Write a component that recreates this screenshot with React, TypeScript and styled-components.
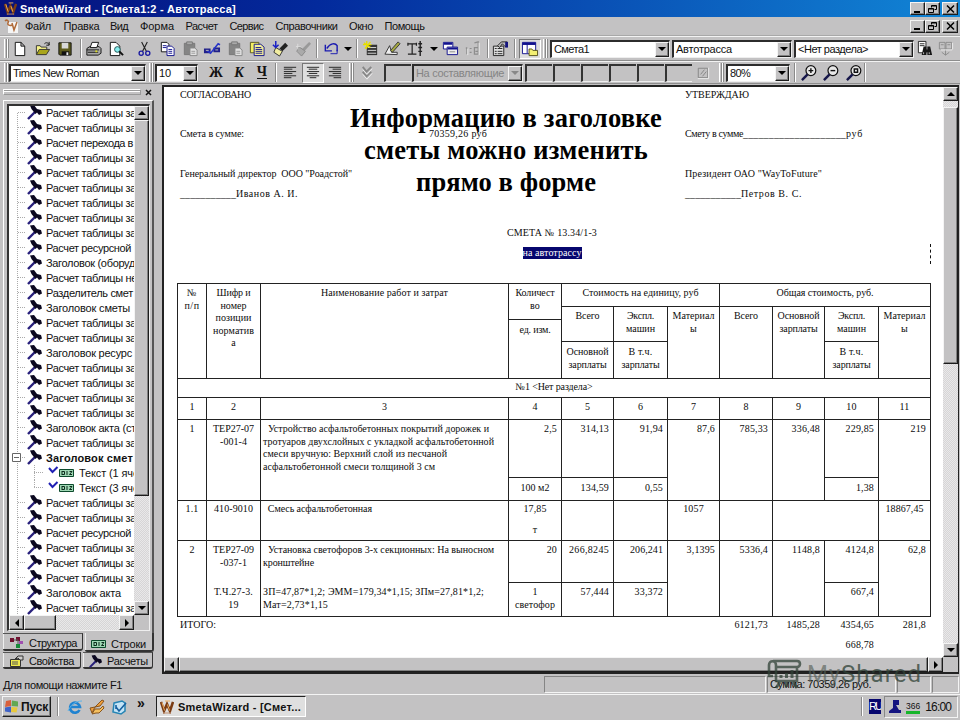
import React, { useLayoutEffect, useRef, useState } from "react";
import styled, { createGlobalStyle, css } from "styled-components";

const face = "#c3c2c3";
const raised = css`
  background: ${face};
  border: 1px solid;
  border-color: #f4f4f4 #1c1c1c #1c1c1c #f4f4f4;
  box-shadow: inset -1px -1px 0 #808080;
`;
const dither = css`
  background: repeating-conic-gradient(#d6d5d6 0 25%, #e9e8e9 0 50%) 0 0 / 2px 2px;
`;

const Global = createGlobalStyle`
  * { box-sizing: border-box; }
  body { margin: 0; background: ${face}; overflow: hidden; }
  svg { display: block; flex: none; }
`;

const Window = styled.div`
  width: 960px;
  height: 720px;
  display: flex;
  flex-direction: column;
  overflow: hidden;
  background: ${face};
  color: #111;
  font: 11px/14px "Liberation Sans", Arial, sans-serif;
`;

/* ---------- text fitted to a column width by tracking ---------- */
const FitSpan = styled.span`
  display: inline-block;
  white-space: pre;
  flex: none;
`;
function Fit({ w, children }: { w: number; children: string }) {
  const ref = useRef<HTMLSpanElement>(null);
  const [gap, setGap] = useState(0);
  useLayoutEffect(() => {
    const el = ref.current;
    if (!el) return;
    const range = document.createRange();
    range.selectNodeContents(el);
    const natural = range.getBoundingClientRect().width - gap * children.length;
    setGap((w - natural) / children.length);
  }, [w, children]);
  return (
    <FitSpan ref={ref} style={{ letterSpacing: gap }}>
      {children}
    </FitSpan>
  );
}

/* ---------- title and menu ---------- */
const TitleBar = styled.header`
  height: 17px;
  flex: none;
  display: flex;
  align-items: center;
  padding: 0 2px 0 4px;
  gap: 3px;
  color: #fff;
  font-weight: bold;
  background: linear-gradient(90deg, #06107c 0%, #032a9c 33%, #0a55b8 66%, #1186d6 100%);
`;
const MenuBar = styled.nav`
  height: 19px;
  flex: none;
  display: flex;
  align-items: center;
  padding: 0 2px 0 4px;
  border-bottom: 1px solid #a8a8a8;
`;
const MenuItem = styled.div<{ $slot: number }>`
  width: ${(p) => p.$slot}px;
`;
const Caption = styled.div`
  margin-left: auto;
  display: flex;
`;
const CapButton = styled.div<{ $gap?: boolean }>`
  ${raised}
  width: ${(p) => (p.$gap ? 16 : 15)}px;
  height: 13px;
  margin-left: ${(p) => (p.$gap ? 2 : 0)}px;
  display: grid;
  place-items: center;
`;
function CaptionButtons() {
  return (
    <Caption>
      <CapButton><svg width="11" height="10" stroke="#000" strokeWidth="2"><path d="M2 8h6" /></svg></CapButton>
      <CapButton>
        <svg width="11" height="10" fill="none" stroke="#000"><path d="M4.500 3.500v-2h5v4h-2M4.500 2h5M1.500 4.500h5v4h-5zM1.500 5h5" /></svg>
      </CapButton>
      <CapButton $gap><svg width="11" height="10" stroke="#000" strokeWidth="1.500"><path d="M2 1.500l7 7M9 1.500l-7 7" /></svg></CapButton>
    </Caption>
  );
}
const menus: [string, number, number][] = [
  ["Файл", 26, 38.5], ["Правка", 36, 46.5], ["Вид", 18, 30], ["Форма", 34, 45.5], ["Расчет", 32, 44],
  ["Сервис", 34, 46], ["Справочники", 62, 73.5], ["Окно", 24, 35.5], ["Помощь", 40, 50],
];

/* ---------- toolbars ---------- */
const Bar = styled.div<{ $h: number }>`
  height: ${(p) => p.$h}px;
  flex: none;
  display: flex;
  align-items: center;
  padding-left: 4px;
  border-top: 1px solid #f2f2f2;
  border-bottom: 1px solid #8d8d8d;
`;
const Grip = styled.i<{ $ml?: number; $mr?: number }>`
  width: 5px;
  height: 19px;
  flex: none;
  margin: 0 ${(p) => p.$mr ?? 0}px 0 ${(p) => p.$ml ?? 0}px;
  border: solid;
  border-width: 0 1px 0 1px;
  border-color: #8a8a8a #8a8a8a #8a8a8a #fff;
  background: linear-gradient(90deg, ${face} 1px, #8a8a8a 1px 2px, #fff 2px 3px);
`;
const Sep = styled.i<{ $ml: number }>`
  width: 2px;
  height: 19px;
  flex: none;
  margin-left: ${(p) => p.$ml}px;
  background: linear-gradient(90deg, #8a8a8a 50%, #fff 50%);
`;
const Tool = styled.div<{ $ml: number; $w?: number; $on?: boolean }>`
  width: ${(p) => p.$w ?? 20}px;
  height: 20px;
  flex: none;
  margin-left: ${(p) => p.$ml}px;
  display: grid;
  place-items: center;
  ${(p) => p.$on && css`
    background: #dedede;
    border: 1px solid;
    border-color: #777 #fff #fff #777;
  `}
`;
const Letter = styled.b<{ $italic?: boolean; $line?: boolean }>`
  font: ${(p) => (p.$italic ? "italic " : "")}bold 14px/16px "Liberation Serif", serif;
  ${(p) => p.$line && "border-bottom: 1.500px solid #111; line-height: 12px;"}
`;
const ComboBox = styled.div<{ $w: number; $ml?: number; $off?: boolean }>`
  width: ${(p) => p.$w}px;
  height: 18px;
  flex: none;
  margin-left: ${(p) => p.$ml ?? 0}px;
  display: flex;
  align-items: center;
  justify-content: space-between;
  padding-left: 2px;
  background: ${(p) => (p.$off ? face : "#fff")};
  color: ${(p) => (p.$off ? "#858585" : "#111")};
  border: 1px solid;
  border-width: 2px 1px 1px 2px;
  border-color: #2c2c2c #eee #eee #2c2c2c;
`;
const Drop = styled.div`
  ${raised}
  width: 14px;
  height: 15px;
  display: grid;
  place-items: center;
`;
const Well = styled.i<{ $w: number; $ml: number }>`
  width: ${(p) => p.$w}px;
  height: 18px;
  flex: none;
  margin-left: ${(p) => p.$ml}px;
  border-top: 2px solid #333;
  border-left: 2px solid #333;
  border-bottom: 1px solid #eee;
`;
function Tri({ d = "down", c = "#000" }: { d?: "up" | "down" | "left" | "right"; c?: string }) {
  const paths = { up: "M0 6h8L4 2z", down: "M0 2h8L4 6z", left: "M6 0v8L2 4z", right: "M2 0v8l4-4z" };
  return <svg width="8" height="8" fill={c}><path d={paths[d]} /></svg>;
}
function Combo({ text, fit, w, ml, off }: { text: string; fit: number; w: number; ml?: number; off?: boolean }) {
  return (
    <ComboBox $w={w} $ml={ml} $off={off}>
      <Fit w={fit}>{text}</Fit>
      <Drop><Tri c={off ? "#888" : "#000"} /></Drop>
    </ComboBox>
  );
}

const glyphs: Record<string, React.ReactNode> = {
  blank: <path d="M4.500 2.500h6l4 4v10h-10zM10.500 2.500v4h4" fill="#fff" stroke="#111" />,
  open: <><path d="M2.500 15V6h4l1 1.500h6V10" fill="#f7f38a" stroke="#333" /><path d="M2.500 15.500l3-5.500h11l-3.500 5.500z" fill="#a9a51c" stroke="#333" /><path d="M11 4c2-2 4-1 5 1m0-3v3.500h-3" fill="none" stroke="#111" /></>,
  save: <><path d="M3 3h13v13H4l-1-1z" fill="#5c5a1c" stroke="#111" /><path d="M6 3h7v6H6z" fill="#d8d8d8" /><path d="M6 12h8v4H6z" fill="#111" /><path d="M11 13h2v3h-2z" fill="#eee" /></>,
  print: <><path d="M3 9l3-2h10l2 2v5l-3 2H3z" fill="#aaa" stroke="#111" /><path d="M6.500 8l2-5.500h7L13.500 8z" fill="#fff" stroke="#111" /><path d="M3 10.500h13M4 13h11" stroke="#111" /><path d="M12 12h2" stroke="#dd2" strokeWidth="2" /></>,
  preview: <><path d="M3.500 2.500h6l4 4v10h-10z" fill="#fff" stroke="#111" /><circle cx="11" cy="10" r="3" fill="#8ee" stroke="#255" /><path d="M13 12l4 4" stroke="#111" strokeWidth="2" /></>,
  cut: <><path d="M7 2l5 10M13 2L8 12" stroke="#222" strokeWidth="1.200" /><circle cx="6.500" cy="14" r="2.200" fill="none" stroke="#1a1aa0" strokeWidth="1.400" /><circle cx="13.500" cy="14" r="2.200" fill="none" stroke="#1a1aa0" strokeWidth="1.400" /></>,
  copy: <><path d="M3.500 2.500h6l2 2v8h-8z" fill="#fff" stroke="#111" /><path d="M9.500 6.500h5l2.500 2.500v7.500H9.500z" fill="#fff" stroke="#12128e" /><path d="M5 6h4M5 8h4M11 10h4M11 12h4M11 14h4" stroke="#12128e" /></>,
  pasteOff: <><path d="M3.500 3.500h11v12h-11z" fill="#858585" stroke="#777" /><path d="M6 2h6v3H6z" fill="#aaa" stroke="#777" /><path d="M9.500 8.500h5l2.500 2v6H9.500z" fill="#e2e2e2" stroke="#888" /><path d="M11 12h4M11 14h4" stroke="#999" /></>,
  link: <><path d="M1 9h7v5H1zM11 8h7v5h-7z" fill="#20208a" /><path d="M4 11l4 3 8-10 2 1" stroke="#2633c8" fill="none" strokeWidth="1.600" /><path d="M3 11h3M13 10.500h3" stroke="#bbb" /></>,
  notes: <><path d="M2.500 2.500h9v11h-9z" fill="#f3ef62" stroke="#5a5720" /><path d="M6.500 4.500h7l3.500 3v9H6.500z" fill="#f3ef9a" stroke="#14148c" /><path d="M8 8h6M8 10h7M8 12h7M8 14h7" stroke="#14148c" /></>,
  brush: <><path d="M9 9l6-6 3 3-6 6z" fill="#222" /><path d="M5 8l7 4-3 5-6-4z" fill="#f2eda0" stroke="#333" /><path d="M5 1v7M2 5l3 3 3-3" stroke="#1b22c6" fill="none" strokeWidth="1.600" /></>,
  brushOff: <><path d="M8 10l8-8 2 2-7 8z" fill="#999" /><path d="M5 7l7 5-4 5-5-5z" fill="#aaa" stroke="#888" /><path d="M2 7h5M4 4v6" stroke="#ddd" /></>,
  undo: <><path d="M16 12V6c-2-3-7-3-11 3" fill="none" stroke="#1b1bb0" strokeWidth="1.500" /><path d="M3.500 5v6.500h7" fill="none" stroke="#1b1bb0" strokeWidth="1.500" /><path d="M9 14.500h7v-4" fill="none" stroke="#1b1bb0" /></>,
  list: <><path d="M5 5h11v11H5z" fill="#333" /><path d="M6 8h9M6 11h9M6 14h9" stroke="#ddd" /><path d="M2 3l7 5M9 2L3 9M5 1v8M1 5h9" stroke="#e7df00" strokeWidth="1.300" /></>,
  pen: <><path d="M2 15l5-9 2 7h6v2.500z" fill="#eee" stroke="#333" /><path d="M8 11l8-9 2 2-8 9z" fill="#a6aa42" stroke="#333" /></>,
  pole: <><path d="M2 4h9M6.500 4v11M2 15h9M2 3v3M11 3v3" stroke="#222" fill="none" strokeWidth="1.300" /><path d="M15 1v16M13 4h4M13 8h4M13 12h4" stroke="#222" strokeWidth="1.500" /></>,
  windows: <><path d="M2.500 2.500h10v7h-10z" fill="#fff" stroke="#12128e" /><path d="M6.500 7.500h11v8h-11z" fill="#eee" stroke="#12128e" /><path d="M3 4h9M7 9h10" stroke="#12128e" strokeWidth="2" /><path d="M9 12.500h6" stroke="#888" /></>,
  numOff: <><path d="M3 8v7M2 9l1-1M6 9h2M6 13h2M11 3l4-1v13h-4V8h4M12 12h3" stroke="#8d8d8d" fill="none" strokeWidth="1.300" /><path d="M4 9v7M16 3v13" stroke="#eee" /></>,
  props: <><path d="M2.500 6.500h11v10h-11z" fill="#ddd" stroke="#222" /><path d="M4 9h2M7 9h5M4 12h2M7 12h5M4 14.500h2M7 14.500h5" stroke="#222" /><path d="M7 6l4-4h6v5h-2L12 4 9 8z" fill="#bbb" stroke="#222" /><path d="M15 2h3v6h-3z" fill="#15157e" /></>,
  tree: <><path d="M1.500 2.500h14v12h-14z" fill="#fff" stroke="#12128e" /><path d="M1.500 4h14" stroke="#12128e" strokeWidth="2.500" /><path d="M6.500 5v9" stroke="#12128e" /><path d="M8.500 16.500v-7h3l1 1.500h5v5.500z" fill="#f3ef72" stroke="#55521a" /></>,
  find: <><path d="M2.500 1.500h8v12h-8z" fill="#fff" stroke="#222" /><path d="M4 4h5M4 6h5" stroke="#222" /><path d="M6 16l2-9h3v9zM12 16V7h3l2 9zM9 10h6v3H9z" fill="#161616" /><path d="M8 13v2M14 13v2" stroke="#bbb" /></>,
  findOff: <><path d="M2.500 2.500h6v7h-6zM9.500 2.500h6v7h-6zM4 5h3M11 5h3M9 9v7M5 13l4 3 4-3" fill="none" stroke="#8b8b8b" /><path d="M4 10.500h12M16.500 3v7" stroke="#eee" /></>,
  left: <path d="M3 3.500h13M3 5.500h9M3 8h13M3 10h9M3 12.500h13M3 14.500h8" stroke="#222" />,
  center: <path d="M3 3.500h13M5 5.500h9M3 8h13M5 10h9M3 12.500h13M6 14.500h7" stroke="#222" />,
  right: <path d="M3 3.500h13M7 5.500h9M3 8h13M7 10h9M3 12.500h13M8 14.500h8" stroke="#222" />,
  chevrons: <><path d="M5 3l4 5 5-5M5 8l4 5 5-5" fill="none" stroke="#888" strokeWidth="2" /><path d="M5 6l4.500 5L15 5M5 11l4.500 5L15 10" fill="none" stroke="#eee" /></>,
  boxOff: <><path d="M4.500 4.500h10v10h-10z" fill="none" stroke="#858585" /><path d="M7 11l4-5M9 13l4-5" stroke="#858585" /><path d="M15.500 4v11.500H4" stroke="#eee" fill="none" /></>,
};
const lens = (mark: string) => (
  <><circle cx="11.500" cy="7" r="5.200" fill="#e8e8e8" stroke="#111" strokeWidth="1.300" /><path d="M8 11l-6 6" stroke="#16164a" strokeWidth="2.600" /><path d={mark} fill="none" stroke="#111" strokeWidth="1.500" /></>
);
glyphs.plus = lens("M9 7h5M11.500 4.500v5");
glyphs.minus = lens("M9 7h5");
glyphs.fit = lens("M9.800 5.300h3.500v3.500H9.800z");

function Icon({ name }: { name: string }) {
  return <svg width="18" height="17" viewBox="0 0 19 18">{glyphs[name]}</svg>;
}
function T({ n, ml, on, w }: { n: string; ml: number; on?: boolean; w?: number }) {
  return <Tool $ml={ml} $on={on} $w={w}><Icon name={n} /></Tool>;
}

/* ---------- workspace ---------- */
const Work = styled.main`
  display: flex;
  height: 590px;
  flex: none;
`;
const Side = styled.aside`
  width: 162px;
  flex: none;
  display: flex;
  flex-direction: column;
`;
const DockHead = styled.div`
  height: 16px;
  display: flex;
  align-items: center;
  gap: 4px;
  padding-left: 3px;
`;
const DockGrip = styled.i`
  width: 138px;
  height: 6px;
  border: 1px solid;
  border-color: #fff #999 #999 #fff;
  background: linear-gradient(#999 1px, #fff 1px 2px, ${face} 2px);
`;
const TreeFrame = styled.div`
  width: 151px;
  height: 533px;
  margin-left: 3px;
  padding: 3px 3px 0 3px;
  border: 1px solid;
  border-width: 1px 2px 0 1px;
  border-color: #fff #555 #555 #fff;
`;
const TreeBox = styled.div`
  width: 143px;
  height: 527px;
  display: grid;
  grid-template: 509px 15px / 125px 15px;
  border: 2px solid;
  border-width: 2px 1px 1px 2px;
  border-color: #333 #eee #eee #333;
  background: #fff;
`;
const Tree = styled.div`
  overflow: hidden;
  font-size: 11px;
  background: repeating-linear-gradient(#aaa 0 1px, transparent 1px 2px) 8px 7px / 1px 100% no-repeat;
`;
const TreeRow = styled.div<{ $bold?: boolean }>`
  height: 15px;
  display: flex;
  align-items: center;
  position: relative;
  top: -1px;
  white-space: nowrap;
  font-weight: ${(p) => (p.$bold ? "bold" : "normal")};
`;
const BarButton = styled.div`
  ${raised}
  display: grid;
  place-items: center;
  flex: none;
  min-width: 15px;
  min-height: 14px;
`;
const Thumb = styled.div<{ $len: number; $v?: boolean }>`
  ${raised}
  ${(p) => (p.$v ? `height: ${p.$len}px;` : `width: ${p.$len}px;`)}
  flex: none;
`;
const VTrack = styled.div`
  ${dither}
  display: flex;
  flex-direction: column;
  & > :last-child { margin-top: auto; }
`;
const HTrack = styled.div`
  ${dither}
  display: flex;
  & > :last-child { margin-left: auto; }
`;
const Corner = styled.div`
  background: ${face};
`;
const TabRow = styled.div`
  display: flex;
  padding-left: 3px;
  gap: 2px;
`;
const Tab = styled.div<{ $w: number; $on?: boolean; $h: number }>`
  width: ${(p) => p.$w}px;
  height: ${(p) => p.$h}px;
  display: flex;
  align-items: center;
  gap: ${(p) => (p.$on ? 4 : 5)}px;
  padding: ${(p) => (p.$on ? 4 : 2)}px 0 0 6px;
  border: solid #333;
  border-width: ${(p) => (p.$on ? "0 2px 2px 0" : "1px 1px 2px 0")};
  border-top-color: #555;
  box-shadow: inset 1px 0 0 #eee;
  border-radius: 0 0 3px 2px;
`;

function Hammer({ s = 15 }: { s?: number }) {
  return (
    <svg width={s} height={s} viewBox="0 0 15 15">
      <path d="M1 14L9 6" stroke="#28207c" strokeWidth="2.400" />
      <path d="M3 0.500l4-.5 3 4 4 1 1 3.500-3 1.500L10 7.500 8.500 9 4.500 4z" fill="#0b0820" />
    </svg>
  );
}
function Branch({ nested, last, open }: { nested?: boolean; last?: boolean; open?: boolean }) {
  if (nested)
    return (
      <svg width="50" height="15" fill="none">
        <path d={`M25.500 0v${last ? 8 : 15}M25 7.500h10`} stroke="#aaa" strokeDasharray="1 1" />
        <path d="M40 3l3.500 4 5-5" stroke="#2020b4" strokeWidth="2" />
      </svg>
    );
  return (
    <svg width="18" height="15">
      <path d="M9 7.500h8" stroke="#aaa" strokeDasharray="1 1" />
      {open && <path d="M3.500 3.500h8v8h-8zM5 7.500h5" fill="#fff" stroke="#666" />}
    </svg>
  );
}
const Mark = () => (
  <svg width="16" height="8">
    <path d="M.5.500h14v7H.5z" fill="#9fd8b4" stroke="#0c4a2c" />
    <path d="M3 2v4M3 2.500h2.500v3H3M8 2v4M10.500 2.500H13L10.500 5.500H13" fill="none" stroke="#0b2a1c" />
  </svg>
);

const tbl = "Расчет таблицы за";
const tree: string[] = [
  tbl, tbl, "Расчет перехода в", tbl, tbl, tbl, tbl, tbl, tbl, "Расчет ресурсной", "Заголовок (оборуд",
  "Расчет таблицы не", "Разделитель смет", "Заголовок сметы", tbl, tbl, "Заголовок ресурс", tbl, tbl, tbl, tbl,
  "Заголовок акта (ст", tbl, "*Заголовок смет", ">Текст (1 яче", ">Текст (3 яче", tbl, tbl, "Расчет ресурсной",
  tbl, tbl, tbl, "Заголовок акта", tbl,
];
const treeWidths: Record<string, number> = {
  [tbl]: 90, "Расчет перехода в": 87, "Расчет ресурсной": 85, "Заголовок (оборуд": 89, "Расчет таблицы не": 91,
  "Разделитель смет": 87, "Заголовок сметы": 84, "Заголовок ресурс": 86, "Заголовок акта (ст": 90,
  "*Заголовок смет": 87, ">Текст (1 яче": 60, ">Текст (3 яче": 60, "Заголовок акта": 75,
};

function Sidebar() {
  return (
    <Side>
      <DockHead>
        <DockGrip />
        <svg width="7" height="7" stroke="#111" strokeWidth="1.500"><path d="M1 1l5 5M6 1L1 6" /></svg>
      </DockHead>
      <TreeFrame>
        <TreeBox>
          <Tree>
            {tree.map((t, i) => {
              const nested = t[0] === ">";
              const bold = t[0] === "*";
              return (
                <TreeRow key={i} $bold={bold}>
                  <Branch nested={nested} last={t.includes("3")} open={bold} />
                  {nested ? <Mark /> : <Hammer />}
                  <svg width="4" height="1" />
                  <Fit w={treeWidths[t]}>{nested || bold ? t.slice(1) : t}</Fit>
                </TreeRow>
              );
            })}
          </Tree>
          <VTrack>
            <BarButton><Tri d="up" /></BarButton>
            <Thumb $len={376} $v />
            <BarButton><Tri /></BarButton>
          </VTrack>
          <HTrack>
            <BarButton><Tri d="left" /></BarButton>
            <Thumb $len={32} />
            <BarButton><Tri d="right" /></BarButton>
          </HTrack>
          <Corner />
        </TreeBox>
      </TreeFrame>
      <TabRow>
        <Tab $w={80} $h={18}>
          <svg width="15" height="13"><path d="M1 2h4v4H1zM7 1h4v4H7z" fill="#701030" /><path d="M7 8h4v4H7z" fill="#168a3a" /><path d="M5 4h4v4" fill="none" stroke="#555" /><path d="M10 5h4v3h-4z" fill="#a050b0" /></svg>
          <Fit w={48}>Структура</Fit>
        </Tab>
        <Tab $w={69} $h={19} $on>
          <Mark />
          <Fit w={35}>Строки</Fit>
        </Tab>
      </TabRow>
      <TabRow>
        <Tab $w={78} $h={17}>
          <svg width="15" height="12"><path d="M1.500 4.500h10v7h-10z" fill="#eee94c" stroke="#333" /><path d="M6 4l3-3h5v4h-3L9 3z" fill="#ccc" stroke="#333" /><path d="M3 7h6M3 9h6" stroke="#555" /></svg>
          <Fit w={45}>Свойства</Fit>
        </Tab>
        <Tab $w={70} $h={17}>
          <Hammer s={13} />
          <Fit w={41}>Расчеты</Fit>
        </Tab>
      </TabRow>
    </Side>
  );
}

/* ---------- document ---------- */
const DocFrame = styled.section`
  width: 797px;
  height: 589px;
  margin-top: 1px;
  display: grid;
  grid-template: 570px 15px / 779px 15px;
  border: 2px solid;
  border-width: 2px 1px 2px 2px;
  border-color: #222;
  background: #fff;
`;
const Page = styled.article`
  position: relative;
  overflow: hidden;
  background: #fff;
  font: 10px/14px "Liberation Serif", "Times New Roman", serif;
  color: #0c0c0c;
`;
const Heading = styled.h1`
  position: absolute;
  top: 15px;
  left: 152px;
  width: 380px;
  margin: 0;
  text-align: center;
  font: bold 26.500px/32px "Liberation Serif", "Times New Roman", serif;
  color: #000;
`;
const Approvals = styled.div`
  display: grid;
  grid-template-columns: 249px 256px 240px;
  grid-template-rows: 39px 40px 20px;
  grid-auto-rows: 39px;
  height: 139px;
  padding: 1px 0 0 16px;
`;
const Centered = styled.div`
  height: 20px;
  width: 776px;
  text-align: center;
`;
const Selected = styled.mark`
  display: inline-block;
  height: 12px;
  line-height: 12px;
  background: #06066e;
  color: #fff;
`;
const Caret = styled.i`
  position: absolute;
  left: 766px;
  top: 157px;
  height: 20px;
  border-left: 1px dashed #111;
`;
const cols = "29px 54px 248px 53px 52px 54px 52px 53px 52px 54px 52px";
const Table = styled.div`
  width: 754px;
  margin: 17px 0 0 13px;
  display: grid;
  grid-template-columns: ${cols};
  grid-template-rows: 23px 13px 22px 37px 19px 22px 58px 23px 40px 42px 34px;
  border: 1px solid #222;
  border-width: 1px 0 0 1px;
`;
const Cell = styled.div<{ $c: number; $r: number; $cs?: number; $rs?: number; $a?: string; $pt?: number; $bare?: boolean }>`
  grid-column: ${(p) => p.$c} / span ${(p) => p.$cs ?? 1};
  grid-row: ${(p) => p.$r} / span ${(p) => p.$rs ?? 1};
  display: flex;
  flex-direction: column;
  align-items: ${(p) => p.$a ?? "center"};
  padding: ${(p) => p.$pt ?? 3}px ${(p) => (p.$a === "flex-end" ? 4 : 0)}px 0 ${(p) => (p.$a === "flex-start" ? 2 : 0)}px;
  border: solid #222;
  border-width: 0 ${(p) => (p.$bare ? 0 : 1)}px 1px 0;
  line-height: 12.600px;
  white-space: pre;
  letter-spacing: 0.150px;
`;
const Gap = styled.i<{ $h: number }>`
  height: ${(p) => p.$h}px;
  flex: none;
`;
const Totals = styled.div`
  width: 754px;
  margin-left: 13px;
  padding: 2px 0 0 1px;
  display: grid;
  grid-template-columns: ${cols};
  grid-template-rows: 20px 20px;
  line-height: 12px;
  letter-spacing: 0.150px;
`;
const Total = styled.div<{ $c: number; $r?: number }>`
  grid-column: ${(p) => p.$c};
  grid-row: ${(p) => p.$r ?? 1};
  text-align: ${(p) => (p.$c === 1 ? "left" : "right")};
  padding: 0 5px 0 2px;
`;

/* a line is a text, a text with its width, or a gap in pixels */
type Line = string | [string, number] | number;
interface C { c: number; r: number; cs?: number; rs?: number; a?: "l" | "r"; pt?: number; bare?: boolean; t?: Line[] }
const cells: C[] = [
  { c: 1, r: 1, rs: 4, t: [["№", 10], ["п/п", 15]] },
  { c: 2, r: 1, rs: 4, t: [["Шифр и", 34], ["номер", 26], ["позиции", 36], ["норматив", 41], "а"] },
  { c: 3, r: 1, rs: 4, t: [["Наименование работ и затрат", 127]] },
  { c: 4, r: 1, rs: 2, t: [["Количест", 39], "во"] },
  { c: 4, r: 3, rs: 2, pt: 4, t: [["ед. изм.", 31]] },
  { c: 5, r: 1, cs: 3, t: [["Стоимость на единицу, руб", 116]] },
  { c: 8, r: 1, cs: 4, t: [["Общая стоимость, руб.", 97]] },
  { c: 5, r: 2, rs: 2, t: [["Всего", 24]] },
  { c: 6, r: 2, rs: 2, t: [["Экспл.", 27], ["машин", 29]] },
  { c: 7, r: 2, rs: 3, t: [["Материал", 42], "ы"] },
  { c: 8, r: 2, rs: 3, t: [["Всего", 24]] },
  { c: 9, r: 2, rs: 3, t: [["Основной", 42], ["зарплаты", 38]] },
  { c: 10, r: 2, rs: 2, t: [["Экспл.", 27], ["машин", 29]] },
  { c: 11, r: 2, rs: 3, t: [["Материал", 42], "ы"] },
  { c: 5, r: 4, pt: 4, t: [["Основной", 42], ["зарплаты", 38]] },
  { c: 6, r: 4, pt: 4, t: [["В т.ч.", 24], ["зарплаты", 38]] },
  { c: 10, r: 4, pt: 4, t: [["В т.ч.", 24], ["зарплаты", 38]] },
  { c: 1, r: 5, cs: 11, pt: 2, t: [["№1 <Нет раздела>", 77]] },
  ...Array.from({ length: 11 }, (_, i): C => ({ c: i + 1, r: 6, t: [String(i + 1)] })),
  { c: 1, r: 7, rs: 2, t: ["1"] },
  { c: 2, r: 7, rs: 2, t: [["ТЕР27-07", 41], ["-001-4", 27]] },
  { c: 3, r: 7, rs: 2, a: "l", t: [["  Устройство асфальтобетонных покрытий дорожек и", 226], ["тротуаров двухслойных с укладкой асфальтобетонной", 231], ["смеси вручную: Верхний слой из песчаной", 184], ["асфальтобетонной смеси толщиной 3 см", 172]] },
  { c: 4, r: 7, a: "r", t: ["2,5"] },
  { c: 4, r: 8, pt: 4, t: [["100 м2", 29]] },
  { c: 5, r: 7, a: "r", t: ["314,13"] }, { c: 5, r: 8, a: "r", pt: 4, t: ["134,59"] },
  { c: 6, r: 7, a: "r", t: ["91,94"] }, { c: 6, r: 8, a: "r", pt: 4, t: ["0,55"] },
  { c: 7, r: 7, rs: 2, a: "r", t: ["87,6"] },
  { c: 8, r: 7, rs: 2, a: "r", t: ["785,33"] },
  { c: 9, r: 7, rs: 2, a: "r", t: ["336,48"] },
  { c: 10, r: 7, a: "r", t: ["229,85"] }, { c: 10, r: 8, a: "r", pt: 4, t: ["1,38"] },
  { c: 11, r: 7, rs: 2, a: "r", t: ["219"] },
  { c: 1, r: 9, pt: 2, t: ["1.1"] },
  { c: 2, r: 9, pt: 2, t: [["410-9010", 39]] },
  { c: 3, r: 9, a: "l", pt: 2, t: [["  Смесь асфальтобетонная", 109]] },
  { c: 4, r: 9, pt: 2, t: ["17,85", 8, "т"] },
  { c: 5, r: 9 }, { c: 6, r: 9 },
  { c: 7, r: 9, pt: 2, t: ["1057"] },
  { c: 8, r: 9 }, { c: 9, r: 9, bare: true }, { c: 10, r: 9 },
  { c: 11, r: 9, pt: 2, t: [["18867,45", 38]] },
  { c: 1, r: 10, rs: 2, t: ["2"] },
  { c: 2, r: 10, rs: 2, t: [["ТЕР27-09", 41], ["-037-1", 27], 17, ["Т.Ч.27-3.", 39], "19"] },
  { c: 3, r: 10, rs: 2, a: "l", t: [["  Установка светофоров 3-х секционных: На выносном", 231], ["кронштейне", 51], 17, ["ЗП=47,87*1,2; ЭММ=179,34*1,15; ЗПм=27,81*1,2;", 221], ["Мат=2,73*1,15", 65]] },
  { c: 4, r: 10, a: "r", t: ["20"] },
  { c: 4, r: 11, t: ["1", ["светофор", 40]] },
  { c: 5, r: 10, a: "r", t: [["266,8245", 40]] }, { c: 5, r: 11, a: "r", t: ["57,444"] },
  { c: 6, r: 10, a: "r", t: [["206,241", 33]] }, { c: 6, r: 11, a: "r", t: ["33,372"] },
  { c: 7, r: 10, rs: 2, a: "r", t: ["3,1395"] },
  { c: 8, r: 10, rs: 2, a: "r", t: ["5336,4"] },
  { c: 9, r: 10, rs: 2, a: "r", t: ["1148,8"] },
  { c: 10, r: 10, a: "r", t: ["4124,8"] }, { c: 10, r: 11, a: "r", t: ["667,4"] },
  { c: 11, r: 10, rs: 2, a: "r", t: ["62,8"] },
];

function CellLine({ line }: { line: Line }) {
  if (typeof line === "number") return <Gap $h={line} />;
  if (typeof line === "string") return <span>{line}</span>;
  return <Fit w={line[1]}>{line[0]}</Fit>;
}

function Document() {
  return (
    <DocFrame>
      <Page>
        <Approvals>
          <div><Fit w={71}>СОГЛАСОВАНО</Fit></div><div /><div><Fit w={64}>УТВЕРЖДАЮ</Fit></div>
          <div><Fit w={64}>Смета в сумме:</Fit></div>
          <div><Fit w={58}>70359,26 руб</Fit></div>
          <div><Fit w={58}>Смету в сумме</Fit><Fit w={103}>____________________</Fit><Fit w={17}>руб</Fit></div>
          <div><Fit w={172}>Генеральный директор  ООО "Роадстой"</Fit></div><div />
          <div><Fit w={137}>Президент ОАО "WayToFuture"</Fit></div>
          <div><Fit w={56}>___________</Fit><Fit w={62}>Иванов А. И.</Fit></div><div />
          <div><Fit w={56}>___________</Fit><Fit w={61}>Петров В. С.</Fit></div>
        </Approvals>
        <Centered><Fit w={90}>СМЕТА № 13.34/1-3</Fit></Centered>
        <Centered><Selected><Fit w={59}>на автотрассу</Fit></Selected></Centered>
        <Caret />
        <Table>
          {cells.map((k, i) => (
            <Cell key={i} $c={k.c} $r={k.r} $cs={k.cs} $rs={k.rs} $pt={k.pt} $bare={k.bare}
              $a={k.a === "l" ? "flex-start" : k.a === "r" ? "flex-end" : undefined}>
              {k.t?.map((l, j) => <CellLine key={j} line={l} />)}
            </Cell>
          ))}
        </Table>
        <Totals>
          <Total $c={1}><Fit w={36}>ИТОГО:</Fit></Total>
          <Total $c={8}>6121,73</Total>
          <Total $c={9}>1485,28</Total>
          <Total $c={10}>4354,65</Total>
          <Total $c={11}>281,8</Total>
          <Total $c={10} $r={2}>668,78</Total>
        </Totals>
        <Heading>
          <Fit w={312}>Информацию в заголовке</Fit>
          <Fit w={284}>сметы можно изменить</Fit>
          <br />
          <Fit w={180}>прямо в форме</Fit>
        </Heading>
      </Page>
      <VTrack>
        <BarButton><Tri d="up" /></BarButton>
        <svg width="15" height="6" />
        <Thumb $len={257} $v />
        <BarButton><Tri /></BarButton>
      </VTrack>
      <HTrack>
        <BarButton><Tri d="left" /></BarButton>
        <Thumb $len={749} />
        <BarButton><Tri d="right" /></BarButton>
      </HTrack>
      <Corner />
    </DocFrame>
  );
}

/* ---------- status bar and taskbar ---------- */
const Status = styled.footer`
  position: relative;
  height: 20px;
  flex: none;
  display: flex;
  align-items: center;
  gap: 1px;
  padding: 1px 1px 0 3px;
`;
const Hint = styled.div`
  width: 540px;
`;
const Pane = styled.div<{ $w: number }>`
  width: ${(p) => p.$w}px;
  height: 17px;
  border: 1px solid;
  border-color: #858585 #f4f4f4 #f4f4f4 #858585;
  padding-left: 2px;
`;
const Watermark = styled.div`
  position: absolute;
  left: 767px;
  top: -15px;
  display: flex;
  align-items: center;
  gap: 5px;
  font: 24px/30px Roboto, "Liberation Sans", sans-serif;
  color: rgba(48, 66, 55, 0.75);
`;
const Soft = styled.span`
  color: rgba(85, 95, 88, 0.65);
`;
const Taskbar = styled.footer`
  height: 27px;
  flex: none;
  display: flex;
  align-items: center;
  padding: 0 2px 3px;
  border-top: 1px solid #f4f4f4;
`;
const Start = styled.button`
  ${raised}
  width: 49px;
  height: 21px;
  display: flex;
  align-items: center;
  gap: 2px;
  padding: 0 1px;
  color: #111;
  font: bold 12px "Liberation Sans", Arial, sans-serif;
`;
const Quick = styled.div`
  width: 92px;
  display: flex;
  align-items: center;
  gap: 6px;
  padding-left: 8px;
`;
const More = styled.b`
  font-size: 14px;
  margin: -8px 0 0 4px;
`;
const Task = styled.div`
  width: 150px;
  height: 21px;
  margin-left: 5px;
  display: flex;
  align-items: center;
  gap: 4px;
  padding-left: 3px;
  font-weight: bold;
  background: #dfdfdf;
  border: 1px solid;
  border-color: #222 #fff #fff #222;
`;
const Lang = styled.div`
  width: 12px;
  height: 15px;
  margin: 0 3px 0 6px;
  overflow: hidden;
  background: #06066e;
  color: #fff;
  line-height: 15px;
`;
const Tray = styled.div`
  width: 74px;
  height: 22px;
  display: flex;
  align-items: center;
  gap: 5px;
  padding-left: 4px;
  border: 1px solid;
  border-color: #888 #f4f4f4 #f4f4f4 #888;
  font-size: 12px;
`;
const Level = styled.div`
  font: 8.500px/9px "Liberation Sans", sans-serif;
  border-bottom: 3px solid #17b52a;
  margin-top: 2px;
`;
const Spring = styled.i`
  flex: 1;
`;

const Wizard = ({ s = 14 }: { s?: number }) => (
  <svg width={s} height={s} viewBox="0 0 14 14" fill="none">
    <path d="M1 2l3 9 3-7 3 7 3-9" stroke="#7a3c14" strokeWidth="2.600" />
    <path d="M2 2.500l2.500 8M7.500 4.500l2 6M5 1h5" stroke="#f0b060" />
    <path d="M3 13h8" stroke="#c09070" />
  </svg>
);

export default function App() {
  return (
    <Window>
      <Global />
      <TitleBar>
        <Wizard s={13} />
        <Fit w={216}>SmetaWizard - [Смета1:2 - Автотрасса]</Fit>
        <CaptionButtons />
      </TitleBar>
      <MenuBar>
        <svg width="21" height="15" fill="none">
          <path d="M4 3h10v11H4z" fill="#f4f4f4" /><path d="M1 2c2-2 4 0 3 2s2 3 4 2M8 4l2 7 3-8" stroke="#b06a38" strokeWidth="1.500" />
        </svg>
        {menus.map(([t, w, slot]) => <MenuItem key={t} $slot={slot}><Fit w={w}>{t}</Fit></MenuItem>)}
        <CaptionButtons />
      </MenuBar>
      <Bar $h={25}>
        <Grip $mr={1} />
        <T n="blank" ml={0} /><T n="open" ml={3} /><T n="save" ml={2} /><Sep $ml={5} />
        <T n="print" ml={1} /><T n="preview" ml={3} /><T n="cut" ml={8} /><T n="copy" ml={3} />
        <T n="pasteOff" ml={3} /><T n="link" ml={2} /><T n="pasteOff" ml={3} /><T n="notes" ml={2} />
        <T n="brush" ml={3} /><T n="brushOff" ml={3} /><Sep $ml={3} /><T n="undo" ml={3} />
        <Tool $ml={3} $w={8}><Tri /></Tool><Sep $ml={4} />
        <T n="list" ml={3} /><T n="pen" ml={1} /><T n="pole" ml={3} /><Tool $ml={5} $w={8}><Tri /></Tool>
        <T n="windows" ml={2} /><T n="numOff" ml={3} /><Sep $ml={4} /><T n="props" ml={1} /><Sep $ml={4} />
        <T n="tree" ml={3} w={22} on /><Grip $ml={2} $mr={2} />
        <Combo text="Смета1" fit={35} w={120} />
        <Combo text="Автотрасса" fit={56} w={120} ml={2} />
        <Combo text="<Нет раздела>" fit={70} w={120} ml={2} />
        <T n="find" ml={1} /><T n="findOff" ml={1} />
      </Bar>
      <Bar $h={23}>
        <Grip />
        <Combo text="Times New Roman" fit={86} w={137} />
        <Grip $ml={3} $mr={1} />
        <Combo text="10" fit={12} w={43} />
        <Tool $ml={8}><Letter>Ж</Letter></Tool>
        <Tool $ml={3}><Letter $italic>К</Letter></Tool>
        <Tool $ml={3}><Letter $line>Ч</Letter></Tool>
        <Sep $ml={3} />
        <T n="left" ml={3} /><T n="center" ml={2} w={22} on /><T n="right" ml={1} />
        <Grip $ml={4} $mr={3} />
        <T n="chevrons" ml={0} />
        <Well $w={27} $ml={7} />
        <Combo text="На составляющие" fit={88} w={111} ml={1} off />
        <Well $w={27} $ml={2} /><Well $w={27} $ml={1} /><Well $w={27} $ml={1} />
        <Well $w={27} $ml={1} /><Well $w={27} $ml={1} /><Well $w={27} $ml={1} />
        <T n="boxOff" ml={1} />
        <Grip $ml={6} $mr={2} />
        <Combo text="80%" fit={20} w={64} />
        <Sep $ml={4} />
        <T n="plus" ml={3} /><T n="minus" ml={2} /><T n="fit" ml={3} /><Sep $ml={0} />
      </Bar>
      <Work>
        <Sidebar />
        <Document />
      </Work>
      <Status>
        <Hint><Fit w={119}>Для помощи нажмите F1</Fit></Hint>
        <Pane $w={222} />
        <Pane $w={129}><Fit w={101}>Сумма: 70359,26 руб.</Fit></Pane>
        <Pane $w={34} /><Pane $w={27} />
        <Watermark>
          <svg width="35" height="30" fill="none" stroke="rgba(48,66,55,.75)" strokeWidth="2.600">
            <path d="M6 17H2V6c0-5 7-5 7 0v16h21V9M6 2h24c4 0 4 6 0 6H9" />
            <path d="M14 19v-3M19.500 19v-5M25 19V11M13 23l-4 6M19.500 23v5M26 23l4 6" strokeWidth="3" />
          </svg>
          <div><Soft><Fit w={34}>My</Fit></Soft><Fit w={81}>Shared</Fit></div>
        </Watermark>
      </Status>
      <Taskbar>
        <Start>
          <svg width="15" height="15">
            <path d="M2 2l5-1v6l-6 1z" fill="#d9603c" /><path d="M8 1.500l6 1v5L7.500 7z" fill="#62a852" />
            <path d="M1 8.500l6-1v6l-6-1z" fill="#3e62c8" /><path d="M7.500 8l6 .5-1 5-5.500-.5z" fill="#e8c83c" />
          </svg>
          <Fit w={27}>Пуск</Fit>
        </Start>
        <Sep $ml={6} />
        <Quick>
          <svg width="16" height="16" fill="none"><path d="M12.500 11a5 5 0 1 1 .5-3H4" stroke="#2083d0" strokeWidth="2.600" /><path d="M1 12C3 7 8 2 15 2" stroke="#5eb4e8" /></svg>
          <svg width="16" height="16"><path d="M1 9l5-1 7-7 2 1-4 5-5 1-3 6z" fill="#f0a03c" stroke="#88541c" /><path d="M3 15l3-5h5l3-3 1 2-5 5H7z" fill="#f4c060" stroke="#88541c" /></svg>
          <svg width="16" height="16"><path d="M3 4l8-2 3 2v8l-4 3-8-2z" fill="#c4e4f6" stroke="#2484b4" strokeWidth="1.500" /><path d="M5 8l3 4 7-8M5 6v4" fill="none" stroke="#1760a0" strokeWidth="1.600" /></svg>
          <More>»</More>
        </Quick>
        <Task><Wizard /><Fit w={123}>SmetaWizard - [Смет...</Fit></Task>
        <Spring />
        <Sep $ml={0} />
        <Lang><Fit w={12}>RU</Fit></Lang>
        <Tray>
          <svg width="12" height="15" fill="#141480"><path d="M4 1h6v5H7l3 5h2v3H0v-2l4-3z" /></svg>
          <Level>366</Level>
          <Fit w={26}>16:00</Fit>
        </Tray>
      </Taskbar>
    </Window>
  );
}
